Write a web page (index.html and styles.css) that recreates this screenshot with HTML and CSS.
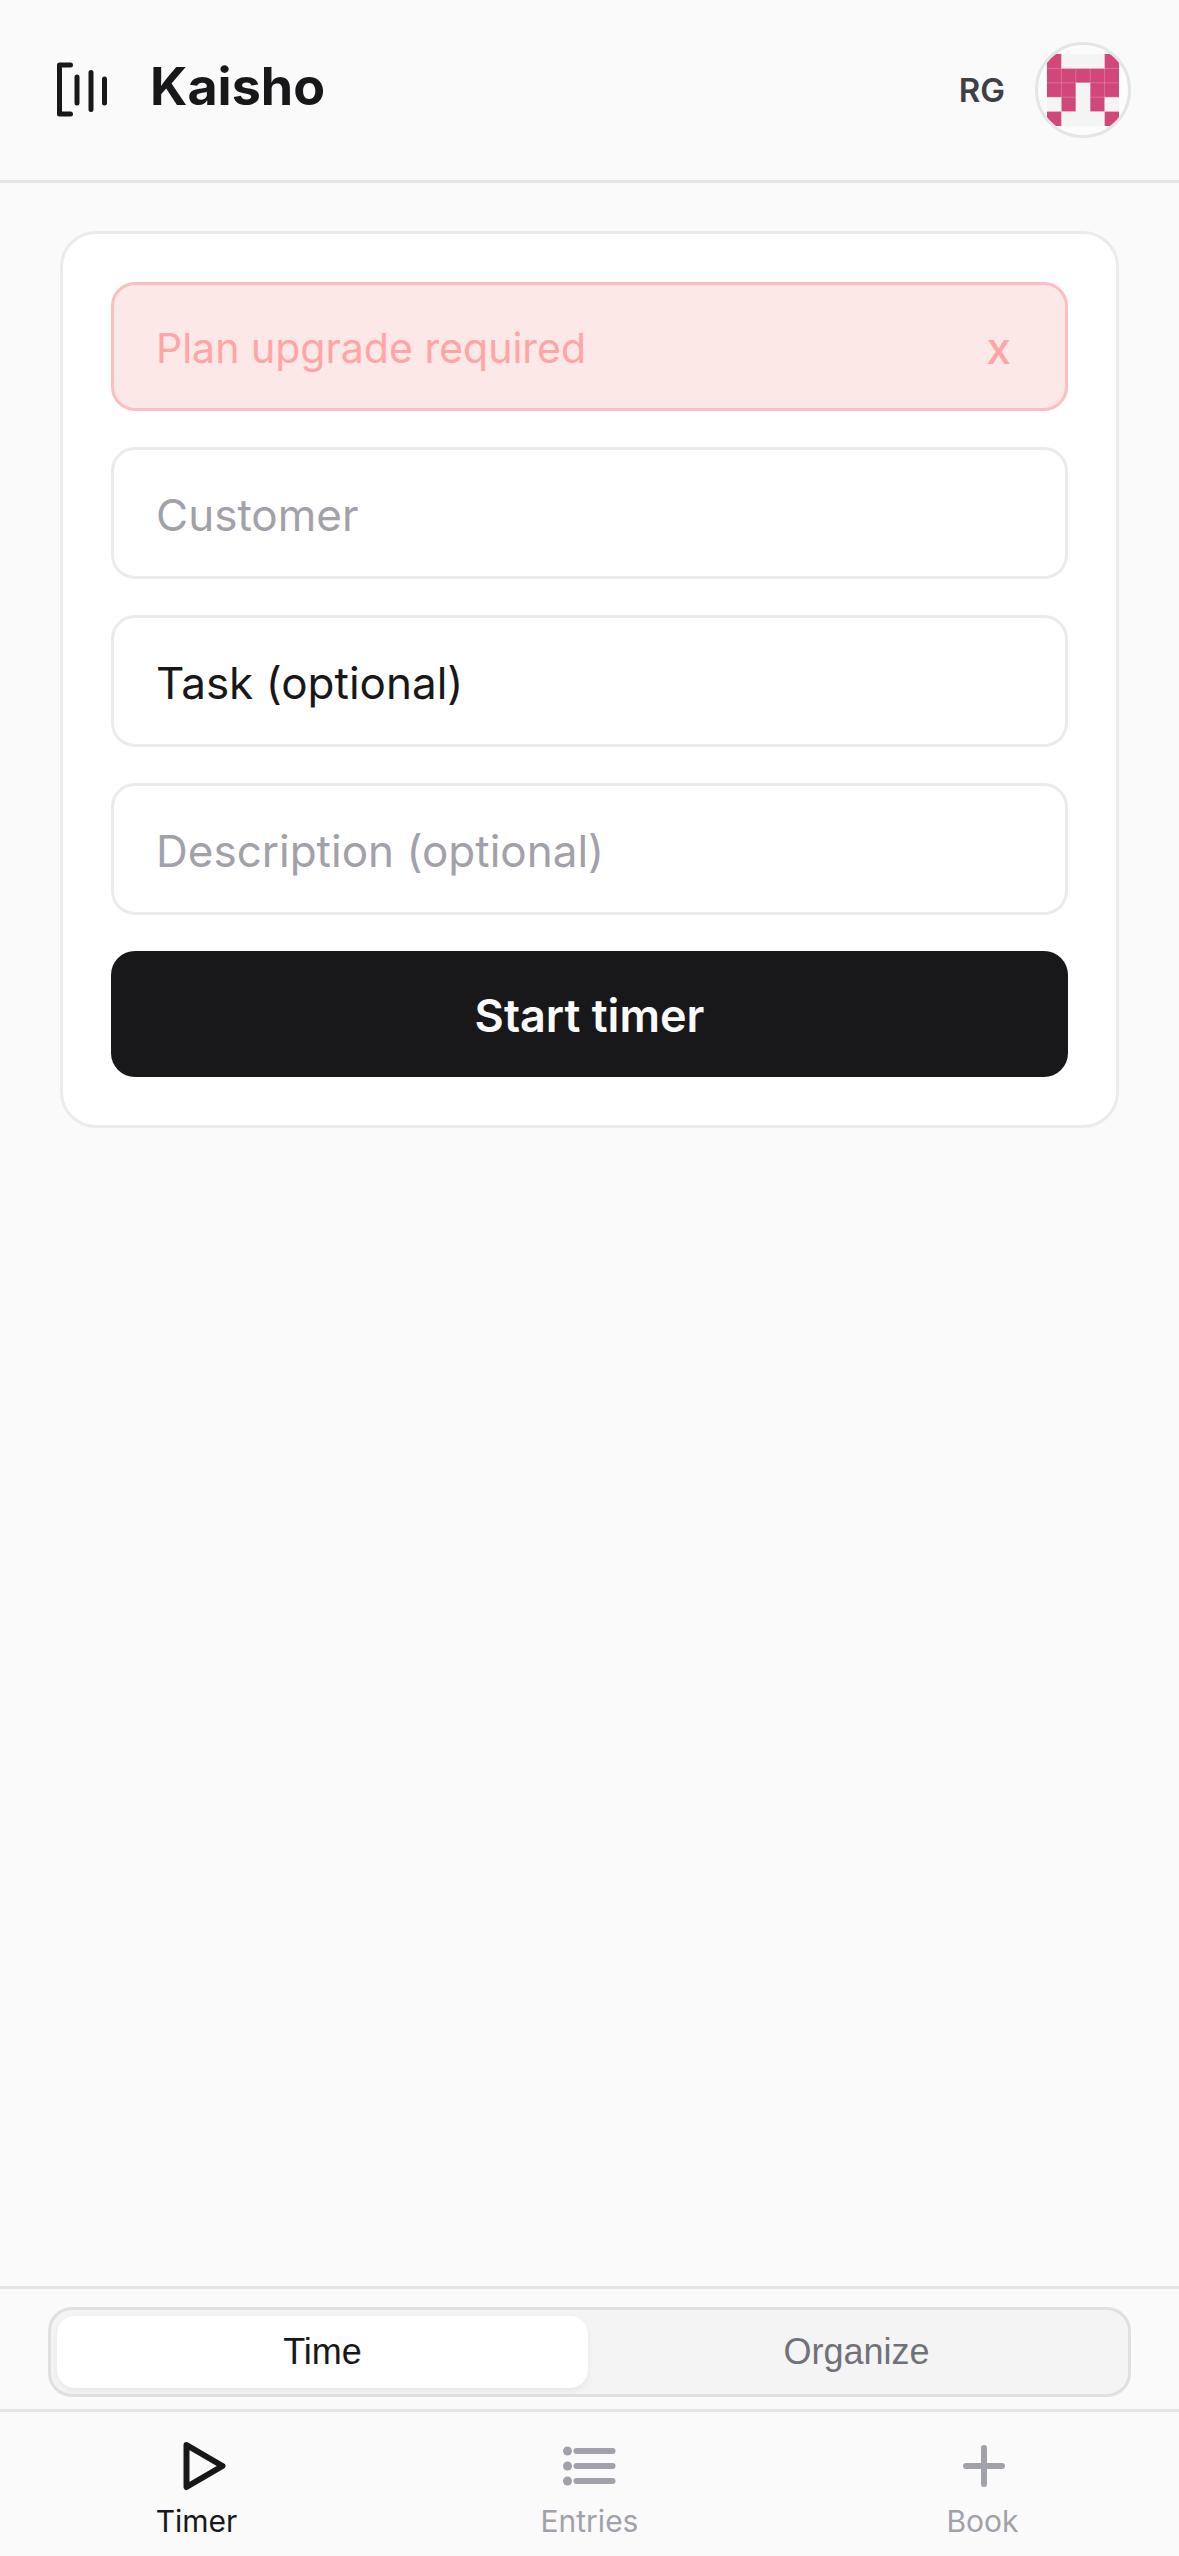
FILE: index.html
```html
<!DOCTYPE html>
<html lang="en">
<head>
  <meta charset="UTF-8">
  <title>Kaisho</title>
  <meta name="viewport" content="width=device-width, initial-scale=1.0">
  <link rel="stylesheet" href="styles.css">
</head>
<body>

  <header class="header">
    <div class="brand">
      <svg class="logo" viewBox="0 0 66 66" aria-hidden="true">
        <path d="M22.5 8H11.5V57H22.5" />
        <path d="M29 20V46M43 15.500V52.500M56.500 22V46" />
      </svg>
      <h1 class="brand-name">Kaisho</h1>
    </div>
    <div class="account">
      <span class="initials">RG</span>
      <div class="avatar">
        <svg viewBox="0 0 5 5" role="img" aria-label="RG avatar">
          <rect class="avatar-bg" width="5" height="5" />
          <path d="M0 0h1v1h-1zM4 0h1v1h-1zM0 1h5v1h-5zM0 2h2v1h-2zM3 2h2v1h-2zM1 3h1v1h-1zM3 3h1v1h-1zM0 4h1v1h-1zM4 4h1v1h-1z" />
          <path class="avatar-lines" d="M1 0V5M4 0V5M2 1V4M3 1V4M0 1H5M0 2H5M0 3H2M3 3H5M1 4H2M3 4H4M0 4H1M4 4H5" />
        </svg>
      </div>
    </div>
  </header>

  <main class="content">
    <form class="card">
      <!-- Error banner -->
      <div class="error" role="alert">
        <span>Plan upgrade required</span>
        <button type="button" class="error-close" aria-label="Dismiss">x</button>
      </div>

      <input class="field" type="text" placeholder="Customer" aria-label="Customer">
      <select class="field" aria-label="Task">
        <option>Task (optional)</option>
      </select>
      <input class="field" type="text" placeholder="Description (optional)" aria-label="Description">
      <button type="button" class="start">Start timer</button>
    </form>
  </main>

  <footer>
    <!-- Mode switch -->
    <div class="switch-bar">
      <div class="switch">
        <button type="button" class="switch-item active">Time</button>
        <button type="button" class="switch-item">Organize</button>
      </div>
    </div>

    <!-- Bottom tabs -->
    <nav class="tabs">
      <a href="#timer" class="tab active">
        <svg viewBox="0 0 66 66" aria-hidden="true">
          <path d="M22.500 12L58.500 33L22.500 54Z" />
        </svg>
        Timer
      </a>
      <a href="#entries" class="tab">
        <svg viewBox="0 0 66 66" aria-hidden="true">
          <path d="M19.500 18H55.500M19.500 33H55.500M19.500 48H55.500" />
          <circle class="dot" cx="10.500" cy="18" r="4.500" />
          <circle class="dot" cx="10.500" cy="33" r="4.500" />
          <circle class="dot" cx="10.500" cy="48" r="4.500" />
        </svg>
        Entries
      </a>
      <a href="#book" class="tab">
        <svg viewBox="0 0 66 66" aria-hidden="true">
          <path d="M34 15V51M16 33H52" />
        </svg>
        Book
      </a>
    </nav>
  </footer>

</body>
</html>
```
FILE: styles.css
```css
* {
  box-sizing: border-box;
  margin: 0;
  padding: 0;
}
body {
  display: flex;
  flex-direction: column;
  min-height: 100vh;
  background: #fafafa;
  color: #18181b;
  font-family: Inter, "Liberation Sans", sans-serif;
}

/* Header */
.header {
  display: flex;
  justify-content: space-between;
  align-items: center;
  padding: 42px 48px;
  border-bottom: 3px solid #e5e5e5;
}
.brand {
  display: flex;
  align-items: center;
  gap: 36px;
}
.logo {
  width: 66px;
  height: 66px;
  fill: none;
  stroke: #18181b;
  stroke-width: 5;
  stroke-linecap: round;
  stroke-linejoin: round;
}
.brand-name {
  font-size: 52px;
  line-height: 60px;
  font-weight: 700;
  padding-bottom: 6px;
}
.account {
  display: flex;
  align-items: center;
  gap: 30px;
}
.initials {
  font-size: 33px;
  font-weight: 600;
  color: #3f3f46;
}
.avatar {
  width: 96px;
  height: 96px;
  padding: 9px;
  border: 3px solid #e5e5e5;
  border-radius: 50%;
  overflow: hidden;
  background: #fcfcfc;
}
.avatar svg {
  display: block;
  width: 72px;
  height: 72px;
  fill: #d1477a;
}
.avatar .avatar-bg {
  fill: #f4f4f4;
}
.avatar-lines {
  fill: none;
  stroke: #fff;
  stroke-opacity: 0.25;
  stroke-width: 0.06;
}

/* Timer form */
.content {
  flex: 1;
  padding: 48px 60px;
}
.card {
  display: flex;
  flex-direction: column;
  gap: 36px;
  padding: 48px;
  background: #fff;
  border: 3px solid #ebebeb;
  border-radius: 36px;
}
.error {
  display: flex;
  justify-content: space-between;
  align-items: center;
  height: 129px;
  padding: 3px 54px 0 42px;
  background: #fce8e6;
  border: 3px solid #fbbfbf;
  border-radius: 24px;
  color: #ffa5a5;
  font-size: 41px;
}
.error-close {
  border: none;
  background: none;
  color: inherit;
  font: inherit;
  font-size: 44px;
  font-weight: 500;
}
.field {
  width: 100%;
  height: 132px;
  padding: 3px 42px 0;
  appearance: none;
  background: #fff;
  border: 3px solid #ebebeb;
  border-radius: 24px;
  color: #18181b;
  font: inherit;
  font-size: 44px;
}
.field::placeholder {
  color: #a1a1aa;
}
.start {
  height: 126px;
  padding-top: 3px;
  border: none;
  border-radius: 24px;
  background: #18181b;
  color: #fafafa;
  font: inherit;
  font-size: 45px;
  font-weight: 600;
}

/* Mode switch */
.switch-bar {
  padding: 18px 48px 12px;
  border-top: 3px solid #e5e5e5;
}
.switch {
  display: flex;
  gap: 3px;
  height: 90px;
  padding: 6px;
  background: #f4f4f4;
  border: 3px solid #e0e0e0;
  border-radius: 24px;
}
.switch-item {
  flex: 1;
  border: none;
  border-radius: 18px;
  background: none;
  color: #71717a;
  font-family: "Liberation Sans", Arial, sans-serif;
  font-size: 36px;
}
.switch-item.active {
  background: #fff;
  color: #18181b;
  box-shadow: 0 3px 6px rgba(0, 0, 0, 0.06);
}

/* Bottom tabs */
.tabs {
  display: flex;
  border-top: 3px solid #e5e5e5;
}
.tab {
  flex: 1;
  display: flex;
  flex-direction: column;
  align-items: center;
  gap: 3px;
  padding: 21px 0 15px;
  color: #a1a1aa;
  font-size: 30px;
  line-height: 39px;
  text-decoration: none;
}
.tab.active {
  color: #18181b;
}
.tab svg {
  width: 66px;
  height: 66px;
  fill: none;
  stroke: currentColor;
  stroke-width: 6;
  stroke-linecap: round;
  stroke-linejoin: round;
}
.tab .dot {
  fill: currentColor;
  stroke: none;
}
```
